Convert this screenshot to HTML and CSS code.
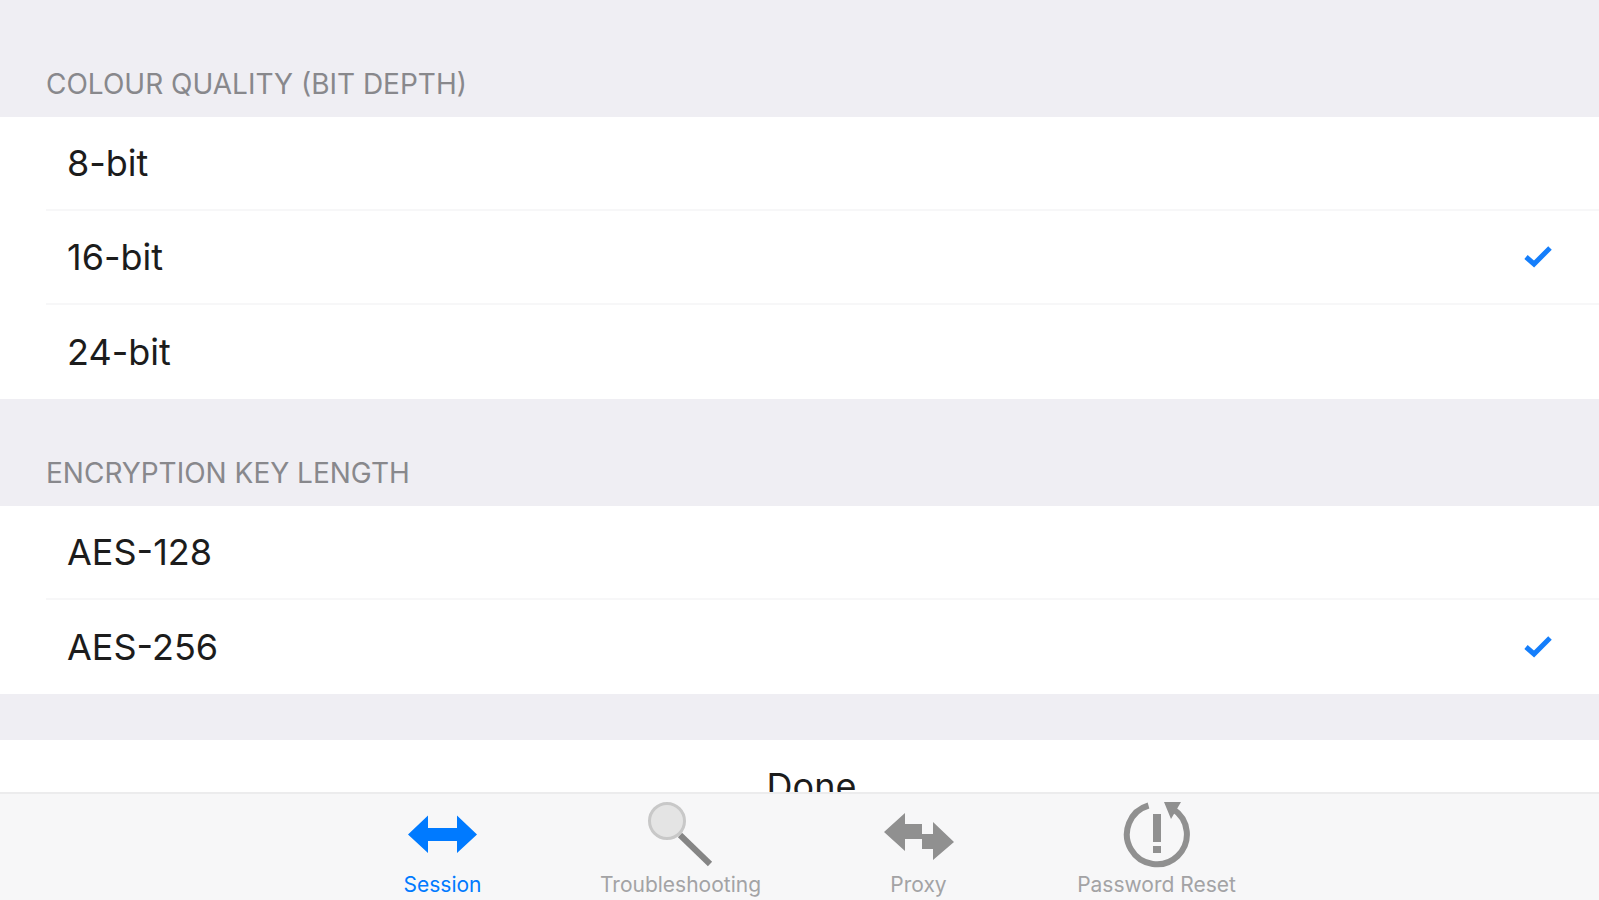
FILE: index.html
```
<!DOCTYPE html>
<html lang="en">

<head>
  <meta charset="UTF-8">
  <meta name="viewport" content="width=device-width, initial-scale=1.0">
  <title>Session Settings</title>
  <link rel="stylesheet" href="styles.css">
</head>

<body>
  <main class="settings">
    <fieldset class="group">
      <legend class="group-title">COLOUR QUALITY (BIT DEPTH)</legend>
      <div class="options">
        <label class="option">
          <span>8-bit</span>
          <input type="radio" name="depth" value="8">
          <svg class="check" viewBox="0 0 28 24"><path d="M2 12l8 7L26 3" /></svg>
        </label>
        <label class="option">
          <span>16-bit</span>
          <input type="radio" name="depth" value="16" checked>
          <svg class="check" viewBox="0 0 28 24"><path d="M2 12l8 7L26 3" /></svg>
        </label>
        <label class="option">
          <span>24-bit</span>
          <input type="radio" name="depth" value="24">
          <svg class="check" viewBox="0 0 28 24"><path d="M2 12l8 7L26 3" /></svg>
        </label>
      </div>
    </fieldset>

    <fieldset class="group">
      <legend class="group-title">ENCRYPTION KEY LENGTH</legend>
      <div class="options">
        <label class="option">
          <span>AES-128</span>
          <input type="radio" name="key" value="128">
          <svg class="check" viewBox="0 0 28 24"><path d="M2 12l8 7L26 3" /></svg>
        </label>
        <label class="option">
          <span>AES-256</span>
          <input type="radio" name="key" value="256" checked>
          <svg class="check" viewBox="0 0 28 24"><path d="M2 12l8 7L26 3" /></svg>
        </label>
      </div>
    </fieldset>

    <button type="button" class="done">Done</button>
  </main>

  <nav class="tabs">
    <a href="#session" class="tab active">
      <svg class="tab-icon" viewBox="0 0 70 70">
        <path fill="currentColor" d="M0 34.500L20 15.500V28H49V15.500L69 34.500L49 53V41H20V53z" />
      </svg>
      <span>Session</span>
    </a>
    <a href="#troubleshooting" class="tab">
      <svg class="tab-icon" viewBox="0 0 70 70">
        <path d="M34 35L64 64" fill="none" stroke="#858585" stroke-width="6" />
        <circle cx="21" cy="21" r="17.500" fill="#e4e4e4" stroke="#c8c8c8" stroke-width="3" />
      </svg>
      <span>Troubleshooting</span>
    </a>
    <a href="#proxy" class="tab">
      <svg class="tab-icon" viewBox="0 0 70 70">
        <path fill="#909090" d="M0 32L21 13V24H38V34H49V22L70 42L49 60V49H38V39H21V51z" />
      </svg>
      <span>Proxy</span>
    </a>
    <a href="#password" class="tab">
      <svg class="tab-icon" viewBox="0 0 70 70">
        <path d="M26.500 5.500A30 30 0 1 0 51 9" fill="none" stroke="#909090" stroke-width="6" />
        <path fill="#909090" d="M42 2H59L49 19zM31 14H39V42H31zM31 46H39V53H31z" />
      </svg>
      <span>Password Reset</span>
    </a>
  </nav>
</body>

</html>
```
FILE: styles.css
```
* {
  box-sizing: border-box;
}

body {
  margin: 0;
  height: 100vh;
  display: flex;
  flex-direction: column;
  font-family: Inter, "Liberation Sans", sans-serif;
  font-size: 36px;
  color: #1c1c1c;
  background-color: #efeef3;
}

.settings {
  flex: 1;
  min-height: 0;
  overflow: hidden;
  padding-top: 10px;
}

.group {
  margin: 0;
  padding: 0;
  border: none;
  min-width: 0;
}

.group-title {
  padding: 57px 46px 16px;
  font-size: 28px;
  line-height: 34px;
  color: #88888c;
}

.options {
  padding-left: 46px;
  background-color: #fff;
}

.option {
  display: flex;
  align-items: center;
  justify-content: space-between;
  height: 94px;
  padding: 0 47px 0 21px;
  border-bottom: 2px solid #f7f7f8;
  cursor: pointer;
}

.option:last-child {
  border-bottom: none;
}

.option input {
  appearance: none;
  width: 0;
  margin: 0 0 0 auto;
  outline: none;
}

.check {
  width: 28px;
  height: 24px;
  fill: none;
  stroke: #147efb;
  stroke-width: 5px;
  visibility: hidden;
}

.option input:checked + .check {
  visibility: visible;
}

.done {
  display: block;
  width: 100%;
  height: 92px;
  margin-top: 46px;
  padding: 0 0 0 24px;
  border: none;
  font: inherit;
  color: #1c1c1c;
  background-color: #fff;
  cursor: pointer;
}

.tabs {
  display: flex;
  justify-content: center;
  border-top: 2px solid #ececed;
  background-color: #f7f7f8;
}

.tab {
  display: flex;
  flex-direction: column;
  align-items: center;
  width: 238px;
  padding-top: 6px;
  font-size: 21px;
  line-height: 30px;
  color: #a3a3a5;
  text-decoration: none;
}

.tab.active {
  color: #007aff;
}

.tab-icon {
  width: 70px;
  height: 70px;
}
```
